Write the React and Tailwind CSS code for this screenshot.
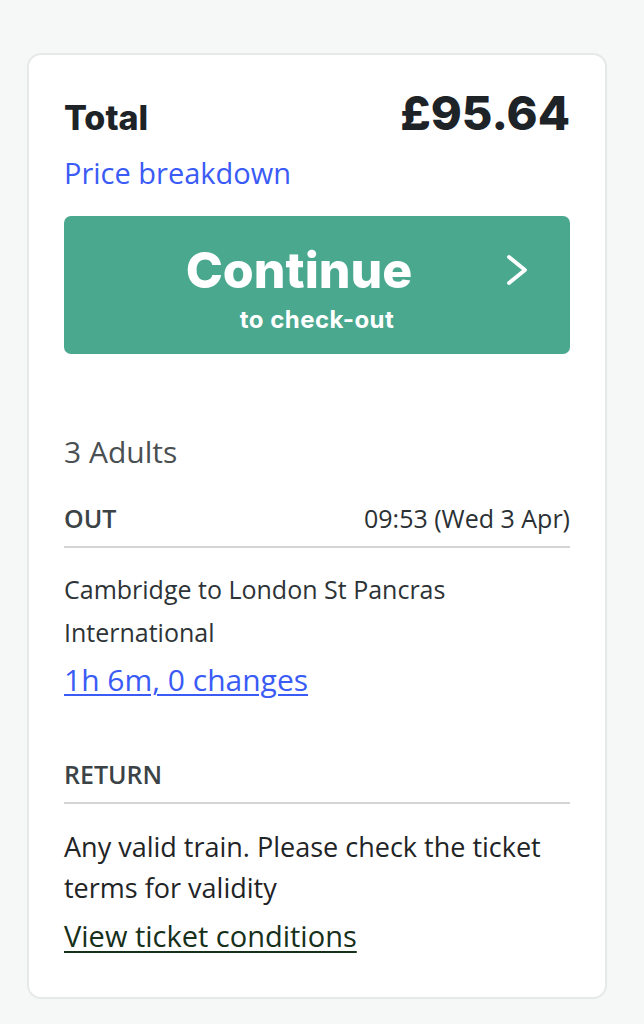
const body = { fontFamily: '"Open Sans", "Noto Sans", sans-serif' };
const head = { fontFamily: 'Inter, "Noto Sans", sans-serif' };

const Section = ({ label, right, className, children }) => (
  <div className={className}>
    <div className="flex items-baseline justify-between border-b-2 border-[#d4d6d6] pb-[11px]">
      <span className="text-[25px] font-semibold leading-[34px] text-[#3b4346]">{label}</span>
      {right ? <span className="text-[25px] leading-[34px] text-[#2a3033]">{right}</span> : null}
    </div>
    {children}
  </div>
);

const App = () => {
  return (
    <div className="min-h-[1024px] bg-[#f6f8f7] pl-[27px] pt-[53px]" style={body}>
      <section className="w-[580px] rounded-[14px] border-2 border-[#e6e9e8] bg-white px-[35px] pb-[39px] pt-[34px]">
        <div className="flex items-baseline justify-between">
          <h2 className="text-[34px] font-extrabold leading-[48px] text-[#1d2326]" style={head}>
            Total
          </h2>
          <p className="text-[47px] font-extrabold leading-[48px] text-[#1d2326]" style={head}>
            £95.64
          </p>
        </div>
        <a className="mt-[13px] block text-[29px] leading-[36px] text-[#3a5bf5]">Price breakdown</a>

        <button className="relative mt-[25px] flex h-[138px] w-full flex-col items-center rounded-[7px] bg-[#4aa88f] pt-[26px] text-white">
          <span className="pr-[36px] text-[50px] font-extrabold leading-[56px]" style={head}>
            Continue
          </span>
          <span className="mt-[8px] text-[24px] font-bold leading-[28px] tracking-[0.5px]" style={head}>
            to check-out
          </span>
          <svg
            className="absolute right-[41px] top-[38px]"
            width="23"
            height="32"
            viewBox="0 0 23 32"
            fill="none"
            stroke="currentColor"
            strokeWidth="3.8"
            strokeLinecap="round"
            strokeLinejoin="round"
          >
            <path d="M3 3 L19 16 L3 29" />
          </svg>
        </button>

        <p className="mt-[78px] text-[30px] leading-[40px] text-[#4a4f52]">3 Adults</p>

        <Section className="mt-[29px]" label="OUT" right="09:53 (Wed 3 Apr)">
          <p className="mt-[20px] text-[25px] leading-[43px] text-[#2d3336]">
            Cambridge to London St Pancras
            <br />
            International
          </p>
          <a className="mt-[4px] block text-[30px] leading-[44px] text-[#3a5bf5] underline decoration-2 underline-offset-[3px]">
            1h 6m, 0 changes
          </a>
        </Section>

        <Section className="mt-[55px]" label="RETURN">
          <p className="mt-[22px] text-[27px] leading-[41px] text-[#1f2426]">
            Any valid train. Please check the ticket
            <br />
            terms for validity
          </p>
          <a className="mt-[6px] block text-[29px] leading-[44px] text-[#16301a] underline decoration-2 underline-offset-[4px]">
            View ticket conditions
          </a>
        </Section>
      </section>
    </div>
  );
};

export default App;
